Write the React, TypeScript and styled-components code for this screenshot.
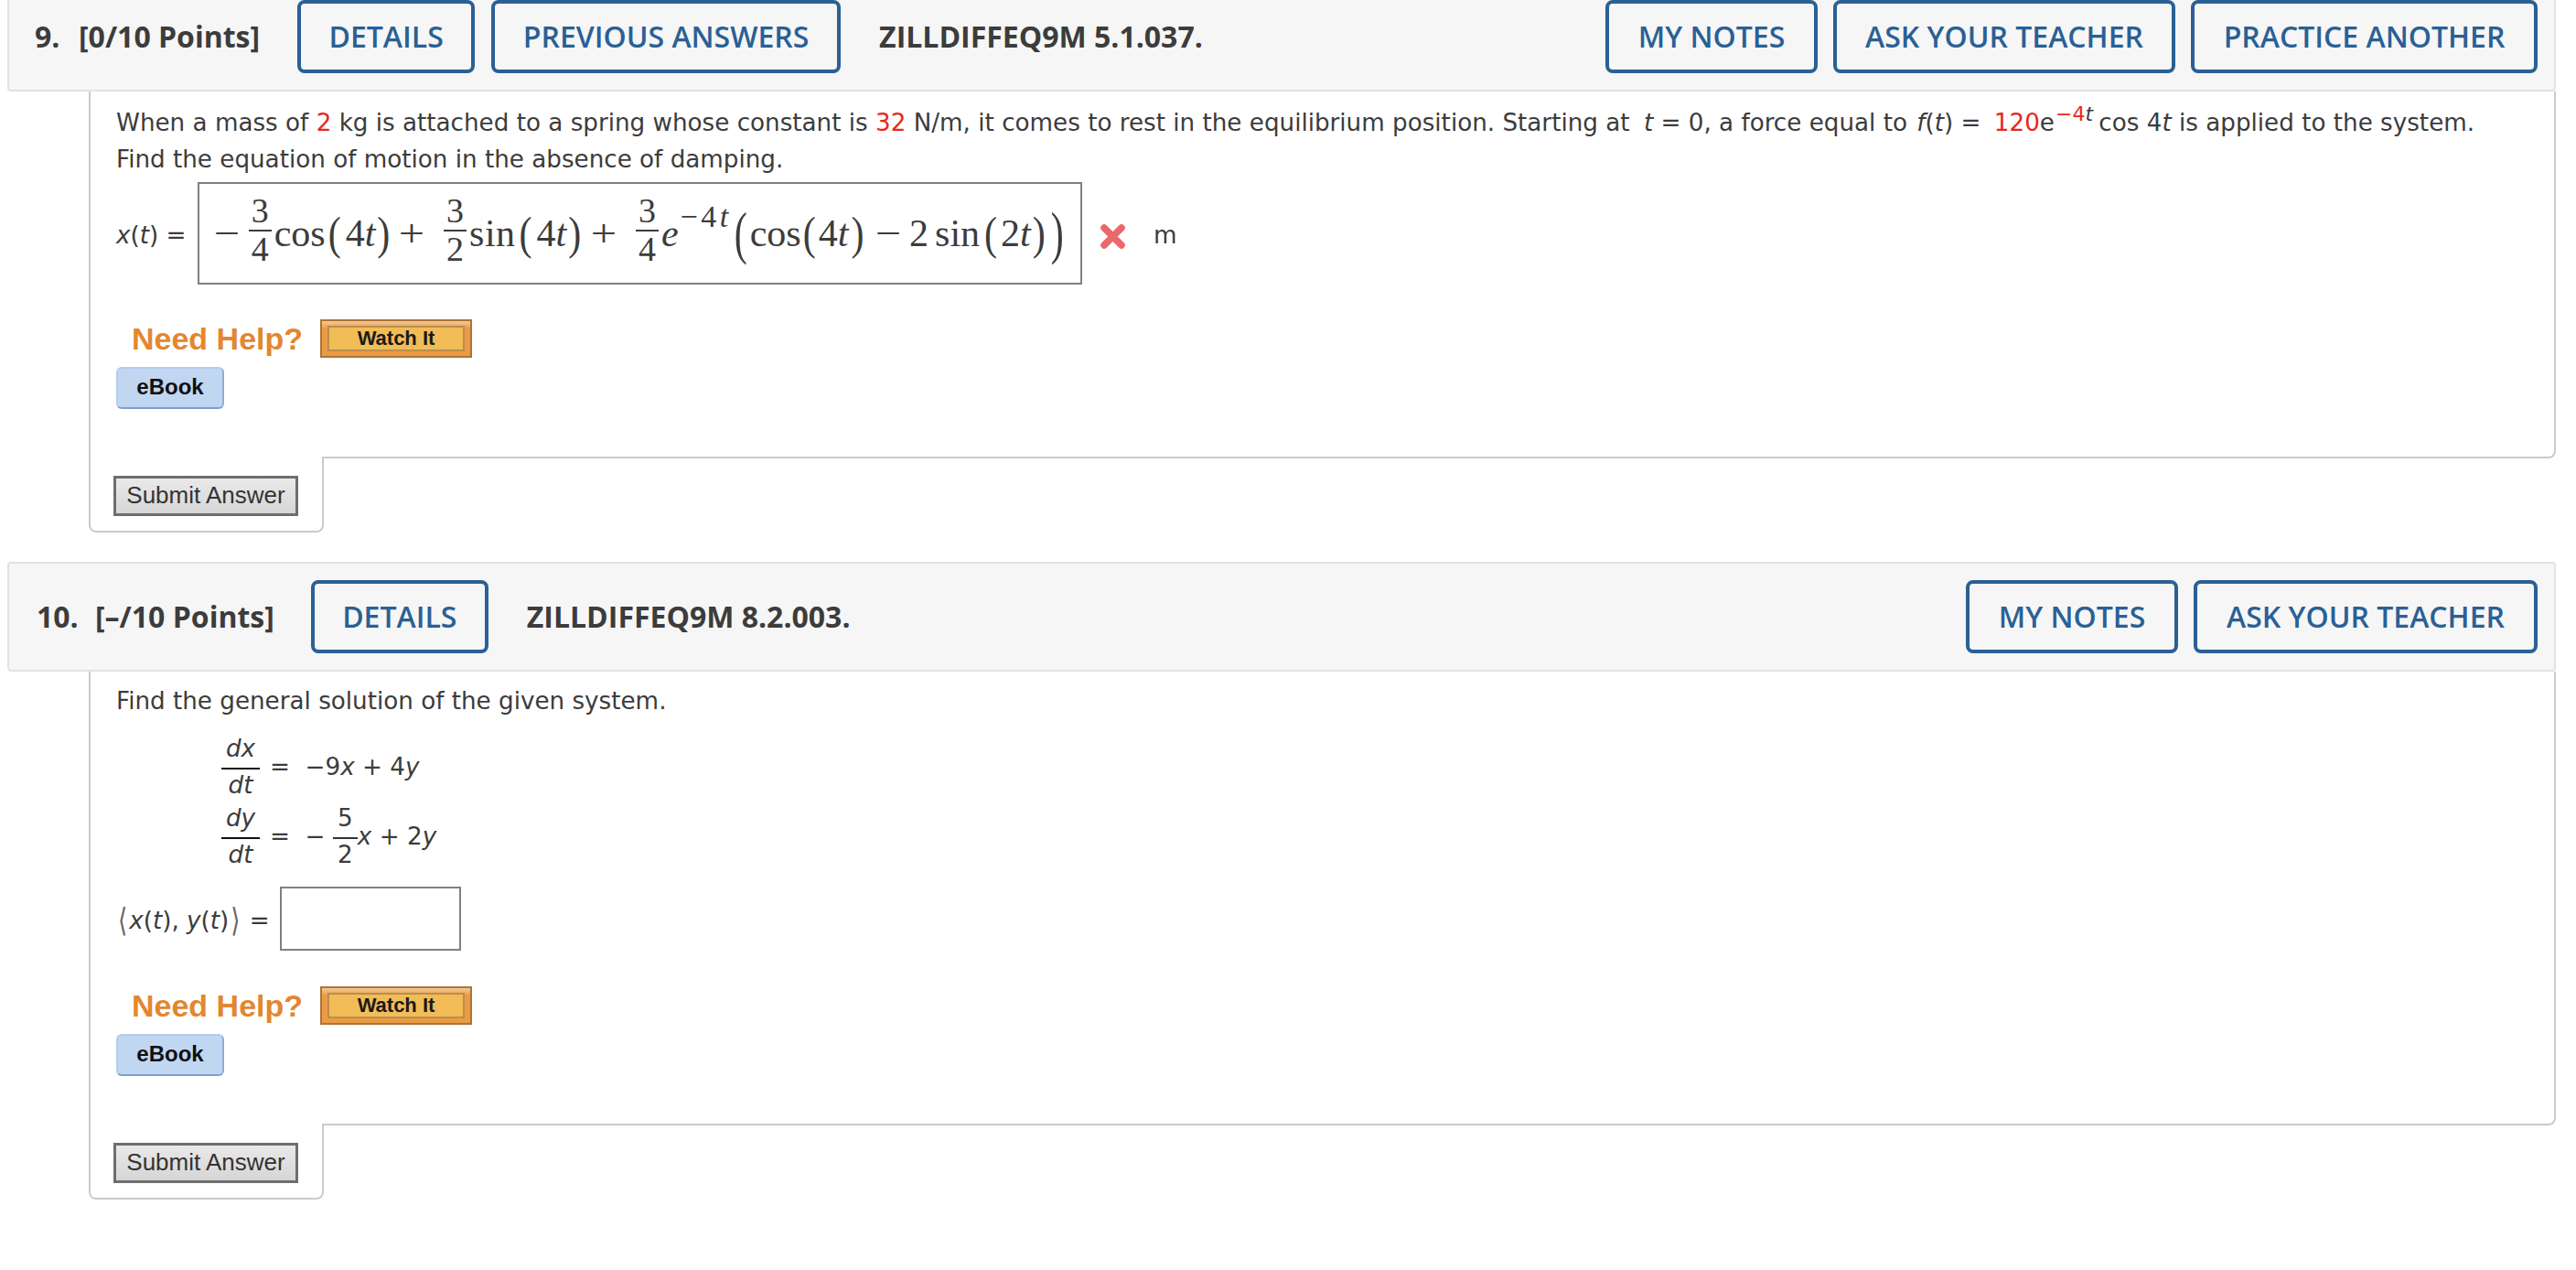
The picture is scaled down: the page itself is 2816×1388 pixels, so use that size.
import React from "react";
import styled, { createGlobalStyle } from "styled-components";

const Global = createGlobalStyle`
  html, body {
    margin: 0;
    background: #fff;
    overflow: hidden;
  }
`;

const Page = styled.div`
  width: 2816px;
  height: 1388px;
  overflow: hidden;
  color: #3c3c3c;
  font-family: "DejaVu Sans", sans-serif;
`;

// page is scrolled a little, the first header is cut off at the top
const Scroller = styled.div`
  margin-top: -20px;
  padding: 0 22px 0 8px;
`;

const Question = styled.section`
  margin-bottom: 32px;
`;

const Header = styled.header`
  display: flex;
  align-items: center;
  height: 120px;
  box-sizing: border-box;
  padding-right: 18px;
  background: #f6f6f6;
  border: 2px solid #e2e2e2;
  border-radius: 4px;
  font-family: "Open Sans", sans-serif;
  font-weight: 600;
`;

const Number = styled.span<{ $left: number; $width: number }>`
  margin-left: ${(p) => p.$left}px;
  width: ${(p) => p.$width}px;
  padding-bottom: 2px;
  font-size: 32px;
  font-weight: 700;
  color: #3c3c3c;
`;

const Points = styled.span<{ $right: number }>`
  margin-right: ${(p) => p.$right}px;
  padding-bottom: 2px;
  font-size: 32px;
  font-weight: 700;
  color: #3c3c3c;
  white-space: nowrap;
`;

const Button = styled.div<{ $width: number }>`
  display: flex;
  align-items: center;
  justify-content: center;
  box-sizing: border-box;
  width: ${(p) => p.$width}px;
  height: 80px;
  padding-bottom: 2px;
  border: 4px solid #2a6095;
  border-radius: 8px;
  color: #2a6095;
  font-size: 32px;
  white-space: nowrap;
`;

const LeftButtons = styled.div`
  display: flex;
  gap: 18px;
`;

const RightButtons = styled.div`
  display: flex;
  gap: 17px;
  margin-left: auto;
`;

const Code = styled.span<{ $left: number }>`
  margin-left: ${(p) => p.$left}px;
  padding-bottom: 2px;
  font-size: 32px;
  font-weight: 700;
  color: #3c3c3c;
  white-space: nowrap;
`;

const Body = styled.div<{ $height: number }>`
  margin-left: 89px;
  height: ${(p) => p.$height}px;
  padding-left: 28px;
  border: 2px solid #cbcbcb;
  border-top: none;
  border-radius: 0 0 8px 0;
`;

const Para = styled.p<{ $top?: number }>`
  margin: 0;
  padding-top: ${(p) => p.$top ?? 0}px;
  font-size: 26.2px;
  line-height: 40px;
  white-space: nowrap;
`;

const Red = styled.span`
  color: #e8281c;
`;

const It = styled.i`
  font-style: oblique;
`;

const Nudge = styled.span<{ $w: number }>`
  margin-left: ${(p) => p.$w}px;
`;

const Sup = styled.sup`
  font-size: 22px;
  line-height: 0;
  vertical-align: 11px;
  margin: 0 -2px 0 1px;
`;

const AnswerRow = styled.div`
  display: flex;
  align-items: center;
  margin-top: 5px;
  font-size: 26.2px;
`;

const Label = styled.span`
  width: 89px;
  padding-top: 3px;
`;

const AnswerBox = styled.div`
  display: flex;
  align-items: center;
  box-sizing: border-box;
  width: 967px;
  height: 112px;
  padding-left: 18px;
  border: 2px solid #808080;
  font-family: "Liberation Serif", serif;
  font-size: 42px;
  color: #3c3c3c;
  white-space: nowrap;
`;

const Frac = styled.span<{ $ml?: number }>`
  display: inline-flex;
  flex-direction: column;
  align-items: center;
  width: 25px;
  margin-left: ${(p) => p.$ml ?? 0}px;
  margin-top: -8px;
  font-size: 38px;
  line-height: 33px;
`;

const FracBar = styled.span`
  width: 100%;
  height: 2px;
  margin: 4px 0 3px;
  background: #3c3c3c;
`;

const Tok = styled.span<{ $ml?: number }>`
  margin-left: ${(p) => p.$ml ?? 0}px;
`;

const Op = styled(Tok)`
  display: inline-block;
  transform: scaleX(1.2);
`;

const Spaced = styled(Tok)`
  letter-spacing: 0.5px;
`;

const MathI = styled.i`
  font-style: italic;
`;

const Paren = styled.span<{ $ml?: number; $big?: boolean }>`
  display: inline-block;
  margin-left: ${(p) => p.$ml ?? 0}px;
  font-weight: 400;
  transform: scaleY(${(p) => (p.$big ? 1.5 : 1.2)});
`;

const MathSup = styled.span`
  margin-left: 2px;
  font-size: 34px;
  letter-spacing: 3.5px;
  transform: translateY(-18px);
`;

const Wrong = styled.svg`
  margin-left: 20px;
  width: 27px;
  height: 27px;
  margin-top: 6px;
`;

const Unit = styled.span`
  margin-left: 31px;
  padding-top: 3px;
`;

const HelpRow = styled.div<{ $top: number }>`
  display: flex;
  align-items: center;
  margin-top: ${(p) => p.$top}px;
`;

const NeedHelp = styled.span`
  width: 206px;
  margin-left: 17px;
  font-family: "Liberation Sans", sans-serif;
  font-weight: 700;
  font-size: 34px;
  color: #e3872f;
`;

const WatchIt = styled.div`
  display: flex;
  box-sizing: border-box;
  width: 166px;
  height: 42px;
  padding: 5px 6px 5px 6px;
  background: linear-gradient(#f3c998, #eb9b42 22%, #eb9b42);
  border: 2px solid #ab743a;
`;

const WatchInner = styled.div`
  flex: 1;
  text-align: center;
  background: #f2bc57;
  border: 2px solid #b98e4e;
  font-family: "Liberation Sans", sans-serif;
  font-weight: 700;
  font-size: 22px;
  line-height: 24px;
  color: #1a1a1a;
`;

const EBook = styled.div`
  box-sizing: border-box;
  width: 118px;
  height: 46px;
  margin-top: 10px;
  text-align: center;
  background: #c1d6f1;
  border: 2px solid #b4cdee;
  border-bottom-color: #7f9fce;
  border-right-color: #8fadd8;
  border-radius: 6px;
  font-family: "Liberation Sans", sans-serif;
  font-weight: 700;
  font-size: 24px;
  line-height: 40px;
  color: #101010;
`;

const SubmitTab = styled.div`
  position: relative;
  box-sizing: border-box;
  width: 257px;
  height: 83px;
  margin: -2px 0 0 89px;
  padding: 21px 0 0 25px;
  background: #fff;
  border: 2px solid #cbcbcb;
  border-top: none;
  border-radius: 0 0 8px 8px;
`;

const Submit = styled.div`
  box-sizing: border-box;
  width: 202px;
  height: 44px;
  text-align: center;
  background: linear-gradient(#e9e9e9, #d6d6d6);
  border: 3px solid #6e6e6e;
  font-family: "Liberation Sans", sans-serif;
  font-size: 26px;
  line-height: 37px;
  color: #333;
`;

const System = styled.div`
  display: grid;
  grid-template-columns: 42px auto;
  column-gap: 11px;
  row-gap: 2px;
  margin: 15px 0 0 115px;
  align-items: center;
  font-size: 26.2px;
`;

const SysFrac = styled.span`
  display: flex;
  flex-direction: column;
  align-items: center;
  line-height: 34px;
`;

const SysBar = styled.span`
  align-self: stretch;
  height: 2px;
  margin-top: 4px;
  background: #111;
`;

const SysRight = styled.div`
  display: flex;
  align-items: center;
  white-space: pre;
`;

const SmallFrac = styled(SysFrac)`
  width: 27px;
`;

const SmallBar = styled(SysBar)`
  background: #333;
`;

const VectorRow = styled.div`
  display: flex;
  align-items: center;
  margin-top: 18px;
  font-size: 26.2px;
  white-space: pre;
`;

const VectorLabel = styled.span`
  width: 179px;
  padding-top: 3px;
`;

const Angle = styled.span`
  display: inline-block;
  margin: 0 2px;
  transform: scaleY(1.35);
  color: #666;
`;

const EmptyBox = styled.div`
  box-sizing: border-box;
  width: 198px;
  height: 70px;
  border: 2px solid #808080;
`;

const Help: React.FC<{ top: number }> = ({ top }) => (
  <>
    <HelpRow $top={top}>
      <NeedHelp>Need Help?</NeedHelp>
      <WatchIt>
        <WatchInner>Watch It</WatchInner>
      </WatchIt>
    </HelpRow>
    <EBook>eBook</EBook>
  </>
);

const Fraction: React.FC<{ top: string; bottom: string; ml?: number }> = ({
  top,
  bottom,
  ml,
}) => (
  <Frac $ml={ml}>
    <span>{top}</span>
    <FracBar />
    <span>{bottom}</span>
  </Frac>
);

const App: React.FC = () => {
  return (
    <Page>
      <Global />
      <Scroller>
        <Question>
          <Header>
            <Number $left={28} $width={48}>
              9.
            </Number>
            <Points $right={41}>[0/10 Points]</Points>
            <LeftButtons>
              <Button $width={194}>DETAILS</Button>
              <Button $width={382}>PREVIOUS ANSWERS</Button>
            </LeftButtons>
            <Code $left={42}>ZILLDIFFEQ9M 5.1.037.</Code>
            <RightButtons>
              <Button $width={232}>MY NOTES</Button>
              <Button $width={374}>ASK YOUR TEACHER</Button>
              <Button $width={379}>PRACTICE ANOTHER</Button>
            </RightButtons>
          </Header>
          <Body $height={399}>
            <Para $top={14}>
              When a mass of <Red>2</Red> kg is attached to a spring whose
              constant is <Red>32</Red> N/m, it comes to rest in the equilibrium
              position. Starting at{" "}
              <Nudge $w={7}>
                <It>t</It>
              </Nudge>{" "}
              = 0, a force equal to{" "}
              <Nudge $w={2}>
                <It>f</It>
              </Nudge>
              (<It>t</It>) ={" "}
              <Nudge $w={6}>
                <Red>120</Red>
              </Nudge>
              e
              <Sup>
                <Red>−4</Red>
                <It>t</It>
              </Sup>{" "}
              cos 4<It>t</It> is applied to the system.
            </Para>
            <Para>Find the equation of motion in the absence of damping.</Para>
            <AnswerRow>
              <Label>
                <It>x</It>(<It>t</It>) =
              </Label>
              <AnswerBox>
                <Op>−</Op>
                <Fraction top="3" bottom="4" ml={12} />
                <Tok $ml={3}>cos</Tok>
                <Paren $ml={3}>(</Paren>
                <Tok $ml={5}>
                  4<MathI>t</MathI>
                </Tok>
                <Paren $ml={2}>)</Paren>
                <Op $ml={12}>+</Op>
                <Fraction top="3" bottom="2" ml={23} />
                <Spaced $ml={3}>sin</Spaced>
                <Paren $ml={4}>(</Paren>
                <Tok $ml={5}>
                  4<MathI>t</MathI>
                </Tok>
                <Paren $ml={2}>)</Paren>
                <Op $ml={13}>+</Op>
                <Fraction top="3" bottom="4" ml={23} />
                <Tok $ml={3}>
                  <MathI>e</MathI>
                </Tok>
                <MathSup>
                  −4<MathI>t</MathI>
                </MathSup>
                <Paren $big $ml={3}>
                  (
                </Paren>
                <Tok $ml={3}>cos</Tok>
                <Paren $ml={2}>(</Paren>
                <Tok $ml={3}>
                  4<MathI>t</MathI>
                </Tok>
                <Paren $ml={3}>)</Paren>
                <Op $ml={15}>−</Op>
                <Tok $ml={11}>2</Tok>
                <Tok $ml={7}>sin</Tok>
                <Paren $ml={5}>(</Paren>
                <Tok $ml={4}>
                  2<MathI>t</MathI>
                </Tok>
                <Paren $ml={2}>)</Paren>
                <Paren $big $ml={6}>
                  )
                </Paren>
              </AnswerBox>
              <Wrong viewBox="0 0 27 27">
                <path
                  d="M4 4 L23 23 M23 4 L4 23"
                  stroke="#e9686c"
                  strokeWidth="7.5"
                  strokeLinecap="round"
                />
              </Wrong>
              <Unit>m</Unit>
            </AnswerRow>
            <Help top={38} />
          </Body>
          <SubmitTab>
            <Submit>Submit Answer</Submit>
          </SubmitTab>
        </Question>
        <Question>
          <Header>
            <Number $left={30} $width={64}>
              10.
            </Number>
            <Points $right={40}>[–/10 Points]</Points>
            <Button $width={194}>DETAILS</Button>
            <Code $left={42}>ZILLDIFFEQ9M 8.2.003.</Code>
            <RightButtons>
              <Button $width={232}>MY NOTES</Button>
              <Button $width={376}>ASK YOUR TEACHER</Button>
            </RightButtons>
          </Header>
          <Body $height={494}>
            <Para $top={12}>Find the general solution of the given system.</Para>
            <System>
              <SysFrac>
                <It>dx</It>
                <SysBar />
                <It>dt</It>
              </SysFrac>
              <SysRight>
                {"=  −9"}
                <It>x</It>
                {" + 4"}
                <It>y</It>
              </SysRight>
              <SysFrac>
                <It>dy</It>
                <SysBar />
                <It>dt</It>
              </SysFrac>
              <SysRight>
                {"=  − "}
                <SmallFrac>
                  5
                  <SmallBar />2
                </SmallFrac>
                <It>x</It>
                {" + 2"}
                <It>y</It>
              </SysRight>
            </System>
            <VectorRow>
              <VectorLabel>
                <Angle>⟨</Angle>
                <It>x</It>(<It>t</It>), <It>y</It>(<It>t</It>)
                <Angle>⟩</Angle> =
              </VectorLabel>
              <EmptyBox />
            </VectorRow>
            <Help top={39} />
          </Body>
          <SubmitTab>
            <Submit>Submit Answer</Submit>
          </SubmitTab>
        </Question>
      </Scroller>
    </Page>
  );
};

export default App;
